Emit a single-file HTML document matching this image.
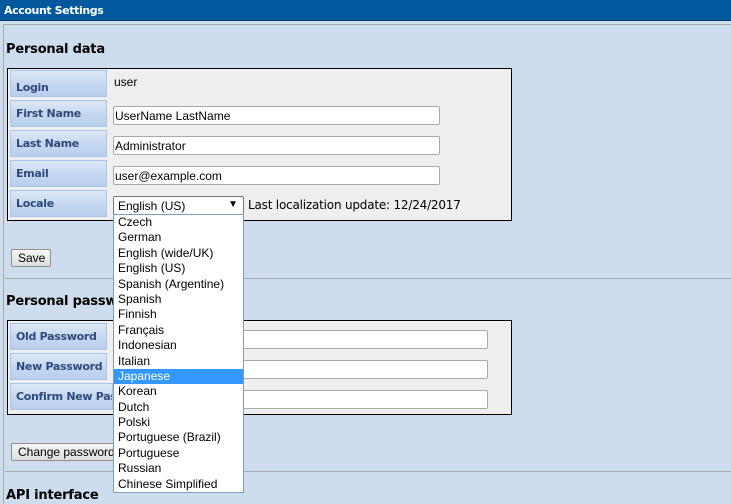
<!DOCTYPE html>
<html><head><style>
*{margin:0;padding:0;box-sizing:border-box}
body{width:731px;height:497px;overflow:hidden;background:#cddded;font-family:"Liberation Sans",sans-serif;position:relative}
.bar{position:absolute;left:0;top:0;width:731px;height:21px;background:#01589c;border-bottom:1px solid #0a3a66;color:#fff;font-weight:bold;font-size:11px;padding:4px 0 0 4px;font-family:"DejaVu Sans",sans-serif;letter-spacing:-0.4px}
.frame{position:absolute;left:3px;top:24px;width:740px;height:480px;border-left:1px solid #a8a8a8;border-top:1px solid #a8a8a8}
.a{position:absolute}
h2{position:absolute;font-family:"DejaVu Sans",sans-serif;font-size:13px;font-weight:bold;color:#000;letter-spacing:-0.2px}
.box{position:absolute;left:7px;width:505px;background:#efefef;border:1px solid #000}
.lab{position:absolute;left:10px;width:97px;height:27px;background:linear-gradient(#dce8f6,#c6d8f0 50%,#b8cfec);border:1px solid #a9c4e8;color:#2c4a7c;font-weight:bold;font-size:11px;font-family:"DejaVu Sans",sans-serif;padding:10px 0 0 5px;letter-spacing:-0.3px}
.inp{position:absolute;left:113px;height:19px;background:#fff;border:1px solid #a9a9a9;border-radius:2px;font-size:12px;padding:2px 0 0 1px;color:#000}
.btn{position:absolute;height:18px;background:linear-gradient(#f6f6f6,#dedede);border:1px solid #8f8f8f;border-radius:2px;font-size:12px;padding:1px 0 0 6px}
.sep{position:absolute;left:5px;width:726px;height:1px;background:#a9a9a9}
.dd{position:absolute;left:113px;top:214px;width:131px;height:279px;background:#fff;border:1px solid #7f9db9;font-size:12px}
.dd div{height:15.4px;line-height:15px;padding-left:4px}
.dd .s{background:#3399ff;color:#fff}
</style></head><body>
<div class="bar">Account Settings</div>
<div class="frame"></div>
<h2 style="left:6px;top:42px">Personal data</h2>
<div class="box" style="top:68px;height:153px"></div>
<div class="lab" style="top:70px">Login</div>
<div class="a" style="left:114px;top:75px;font-size:12px">user</div>
<div class="lab" style="top:100px;padding-top:6px">First Name</div>
<div class="inp" style="top:106px;width:327px">UserName LastName</div>
<div class="lab" style="top:130px;padding-top:6px">Last Name</div>
<div class="inp" style="top:136px;width:327px">Administrator</div>
<div class="lab" style="top:160px;padding-top:6px">Email</div>
<div class="inp" style="top:166px;width:327px">user@example.com</div>
<div class="lab" style="top:190px;padding-top:6px">Locale</div>
<div class="inp" style="top:196px;width:131px;border-color:#777;padding-left:4px">English (US)<span style="position:absolute;right:5px;top:2px;font-size:10px">▼</span></div>
<div class="a" style="left:248px;top:198px;font-size:12px;font-family:'DejaVu Sans',sans-serif;letter-spacing:-0.2px">Last localization update: 12/24/2017</div>
<div class="btn" style="left:11px;top:249px;width:40px">Save</div>
<div class="sep" style="top:278px"></div>
<h2 style="left:6px;top:294px">Personal password</h2>
<div class="box" style="top:320px;height:95px"></div>
<div class="lab" style="top:323px;padding-top:6px">Old Password</div>
<div class="inp" style="top:330px;width:375px"></div>
<div class="lab" style="top:353px;padding-top:6px">New Password</div>
<div class="inp" style="top:360px;width:375px"></div>
<div class="lab" style="top:383px;padding-top:6px;overflow:hidden;white-space:nowrap;width:103px">Confirm New Password</div>
<div class="inp" style="top:390px;width:375px"></div>
<div class="btn" style="left:11px;top:443px;width:120px">Change password</div>
<div class="sep" style="top:471px"></div>
<h2 style="left:6px;top:488px">API interface</h2>
<div class="dd">
<div>Czech</div><div>German</div><div>English (wide/UK)</div><div>English (US)</div><div>Spanish (Argentine)</div><div>Spanish</div><div>Finnish</div><div>Français</div><div>Indonesian</div><div>Italian</div><div class="s">Japanese</div><div>Korean</div><div>Dutch</div><div>Polski</div><div>Portuguese (Brazil)</div><div>Portuguese</div><div>Russian</div><div>Chinese Simplified</div>
</div>
</body></html>
